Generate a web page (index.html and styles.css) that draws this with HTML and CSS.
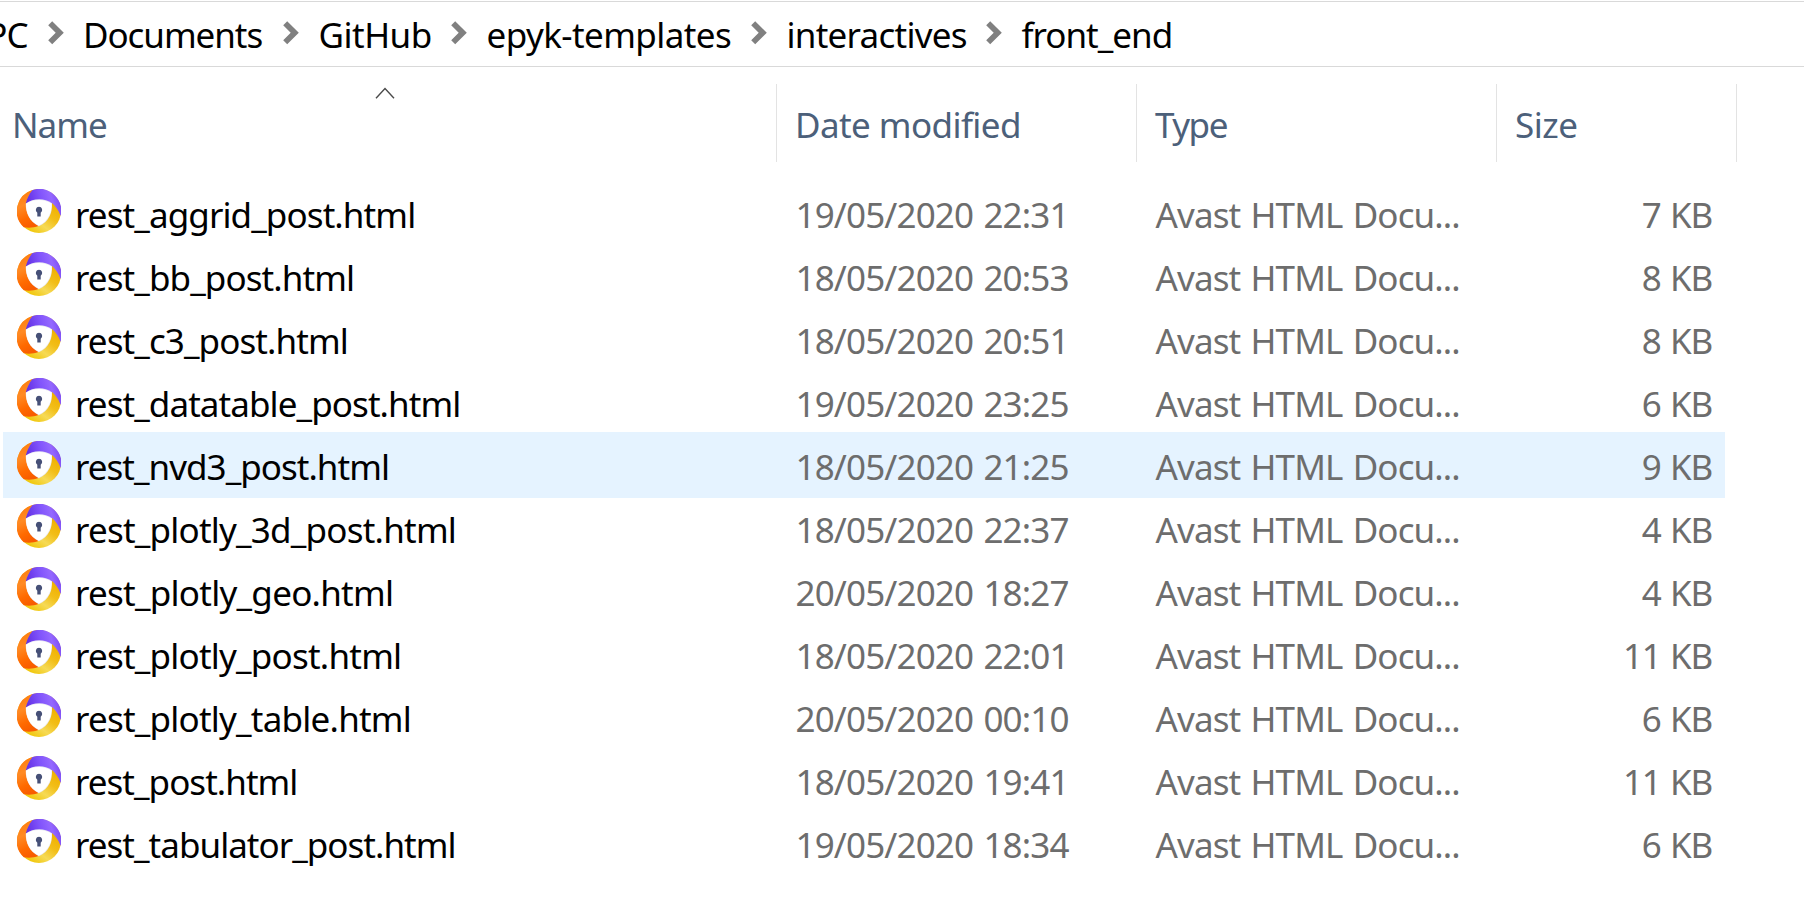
FILE: index.html
```html
<!DOCTYPE html>
<html lang="en">
<head>
<meta charset="utf-8">
<title>front_end</title>
<link rel="stylesheet" href="styles.css">
</head>
<body>
<svg class="defs" width="0" height="0" aria-hidden="true">
  <defs>
    <linearGradient id="violet" x1="0" y1="0.6" x2="1" y2="0.4"><stop offset="0" stop-color="#5f2be0"/><stop offset="0.45" stop-color="#8053fb"/><stop offset="0.75" stop-color="#9468ff"/><stop offset="1" stop-color="#7a48f2"/></linearGradient>
    <linearGradient id="orange" x1="0.2" y1="0" x2="0.5" y2="1"><stop offset="0" stop-color="#ff7a08"/><stop offset="0.4" stop-color="#ff8a24"/><stop offset="0.75" stop-color="#ff6a00"/><stop offset="1" stop-color="#f85c00"/></linearGradient>
    <linearGradient id="yellow" x1="0.8" y1="0.3" x2="0.3" y2="1"><stop offset="0" stop-color="#f0b000"/><stop offset="0.35" stop-color="#f2be18"/><stop offset="0.65" stop-color="#f6da55"/><stop offset="1" stop-color="#f0c400"/></linearGradient>
    <symbol id="avast" viewBox="0 0 44 44">
      <circle cx="22" cy="22" r="22" fill="url(#yellow)"/>
      <path d="M15.5 1A22 22 0 0 0 6.800 38.200C11 39 17 38.800 21.500 37L20 14 9 14Q11 6 15.500 1Z" fill="url(#orange)"/>
      <path d="M15.500 1A22 22 0 0 1 43.600 27C41.500 21 38.500 17 35 14L22 18 8.800 14.500C10 9.500 12 5 15.500 1Z" fill="url(#violet)"/>
      <path d="M8.800 14.600C16 8.900 27.500 8.600 35 14.200C35.400 23 32.500 32.500 21.800 37.200C12.500 33 8.400 23.500 8.800 14.600Z" fill="#e9e9f0"/>
      <path d="M9 14.700C16.500 9.700 27 9.700 34.500 14.500C34.700 23 31.700 32.100 21.800 36.600C12.600 32.300 9 23.500 9 14.700Z" fill="#fff"/>
      <path d="M22 17.800a3.200 3.200 0 0 1 1.700 5.900V27.600h-3.400v-3.900A3.200 3.200 0 0 1 22 17.800Z" fill="#465077"/>
    </symbol>
    <symbol id="chevron" viewBox="0 0 16 24">
      <path d="M4.200 0.300 15.800 11.700 4.200 23.200 0.200 19.200 7.700 11.700 0.200 4.300Z" fill="#808080"/>
    </symbol>
  </defs>
</svg>

<nav class="crumbs">
  <div class="crumb crumb-first"><span>PC</span></div>
  <div class="crumb"><svg><use href="#chevron"/></svg><span class="ls-106">Documents</span></div>
  <div class="crumb"><svg><use href="#chevron"/></svg><span class="ls-50">GitHub</span></div>
  <div class="crumb"><svg><use href="#chevron"/></svg><span class="ls-58">epyk-templates</span></div>
  <div class="crumb"><svg><use href="#chevron"/></svg><span class="ls-74">interactives</span></div>
  <div class="crumb"><svg><use href="#chevron"/></svg><span class="ls-100">front_end</span></div>
</nav>

<div class="columns">
  <div class="col col-name"><span class="ls-100">Name</span><svg class="sort" viewBox="0 0 20 12"><path d="M1 11.200 10 1.500 19 11.200" fill="none" stroke="#4a4a4a" stroke-width="1.400"/></svg></div>
  <div class="col"><span class="ls-58">Date modified</span></div>
  <div class="col"><span class="ls-150">Type</span></div>
  <div class="col"><span class="ls-50">Size</span></div>
</div>

<main class="files">
  <div class="row"><svg class="icon"><use href="#avast"/></svg><span class="name ls-90">rest_aggrid_post.html</span><span class="date">19/05/2020 22:31</span><span class="type">Avast HTML Docu...</span><span class="size">7 KB</span></div>
  <div class="row"><svg class="icon"><use href="#avast"/></svg><span class="name ls-90">rest_bb_post.html</span><span class="date">18/05/2020 20:53</span><span class="type">Avast HTML Docu...</span><span class="size">8 KB</span></div>
  <div class="row"><svg class="icon"><use href="#avast"/></svg><span class="name ls-90">rest_c3_post.html</span><span class="date">18/05/2020 20:51</span><span class="type">Avast HTML Docu...</span><span class="size">8 KB</span></div>
  <div class="row"><svg class="icon"><use href="#avast"/></svg><span class="name ls-92">rest_datatable_post.html</span><span class="date">19/05/2020 23:25</span><span class="type">Avast HTML Docu...</span><span class="size">6 KB</span></div>
  <div class="row selected"><svg class="icon"><use href="#avast"/></svg><span class="name ls-97">rest_nvd3_post.html</span><span class="date">18/05/2020 21:25</span><span class="type">Avast HTML Docu...</span><span class="size">9 KB</span></div>
  <div class="row"><svg class="icon"><use href="#avast"/></svg><span class="name ls-78">rest_plotly_3d_post.html</span><span class="date">18/05/2020 22:37</span><span class="type">Avast HTML Docu...</span><span class="size">4 KB</span></div>
  <div class="row"><svg class="icon"><use href="#avast"/></svg><span class="name ls-74">rest_plotly_geo.html</span><span class="date">20/05/2020 18:27</span><span class="type">Avast HTML Docu...</span><span class="size">4 KB</span></div>
  <div class="row"><svg class="icon"><use href="#avast"/></svg><span class="name ls-78">rest_plotly_post.html</span><span class="date">18/05/2020 22:01</span><span class="type">Avast HTML Docu...</span><span class="size">11 KB</span></div>
  <div class="row"><svg class="icon"><use href="#avast"/></svg><span class="name ls-78">rest_plotly_table.html</span><span class="date">20/05/2020 00:10</span><span class="type">Avast HTML Docu...</span><span class="size">6 KB</span></div>
  <div class="row"><svg class="icon"><use href="#avast"/></svg><span class="name ls-97">rest_post.html</span><span class="date">18/05/2020 19:41</span><span class="type">Avast HTML Docu...</span><span class="size">11 KB</span></div>
  <div class="row"><svg class="icon"><use href="#avast"/></svg><span class="name ls-97">rest_tabulator_post.html</span><span class="date">19/05/2020 18:34</span><span class="type">Avast HTML Docu...</span><span class="size">6 KB</span></div>
</main>
</body>
</html>
```
FILE: styles.css
```css
* { box-sizing: border-box; }

body {
  margin: 0;
  padding-top: 1px;
  height: 908px;
  overflow: hidden;
  background: #fff;
  color: #000;
  font: 35px/48px "Noto Sans", "Open Sans", sans-serif;
  white-space: nowrap;
}

.defs { display: block; }

/* Address bar */
.crumbs {
  display: grid;
  grid-template-columns: 47.5px 235.5px 168px 300px 235px 1fr;
  height: 66px;
  padding-top: 9px;
  border: solid #d9d9d9;
  border-width: 1px 0;
}
.crumb { display: flex; gap: 19.500px; }
.crumb svg { width: 16px; height: 24px; margin-top: 10px; flex: none; }
.crumb-first { justify-content: flex-end; padding-right: 20px; letter-spacing: -1px; }

/* Column headings */
.columns {
  display: grid;
  grid-template-columns: 777px 360px 360px 240px;
  height: 78px;
  margin-top: 17px;
  color: #4c607a;
}
.col { padding: 17px 0 0 18px; border-right: 1px solid #e3e3e3; }
.col-name { position: relative; padding-left: 12px; }
.sort { position: absolute; left: 375px; top: 3px; width: 20px; height: 12px; }

/* File list */
.files { padding: 18px 0 0 3px; }
.row {
  display: grid;
  grid-template-columns: 72px 720.500px 360px 360.500px 196px;
  width: 1722px;
  height: 66px;
  margin-bottom: -3px;
  padding-top: 11px;
}
.selected { background: #e5f3ff; }
.icon { width: 44px; height: 44px; margin: -2px 0 0 14px; }
.date, .type, .size { color: #6d6d6d; }
.date { letter-spacing: -0.85px; word-spacing: 2px; }
.type { letter-spacing: -0.88px; word-spacing: 2px; }
.size { text-align: right; letter-spacing: -1.2px; word-spacing: 1.500px; }

/* Tracking */
.ls-50 { letter-spacing: -0.5px; }
.ls-58 { letter-spacing: -0.58px; }
.ls-74 { letter-spacing: -0.74px; }
.ls-78 { letter-spacing: -0.78px; }
.ls-90 { letter-spacing: -0.9px; }
.ls-92 { letter-spacing: -0.92px; }
.ls-97 { letter-spacing: -0.97px; }
.ls-100 { letter-spacing: -1px; }
.ls-106 { letter-spacing: -1.06px; }
.ls-150 { letter-spacing: -1.5px; }
```
